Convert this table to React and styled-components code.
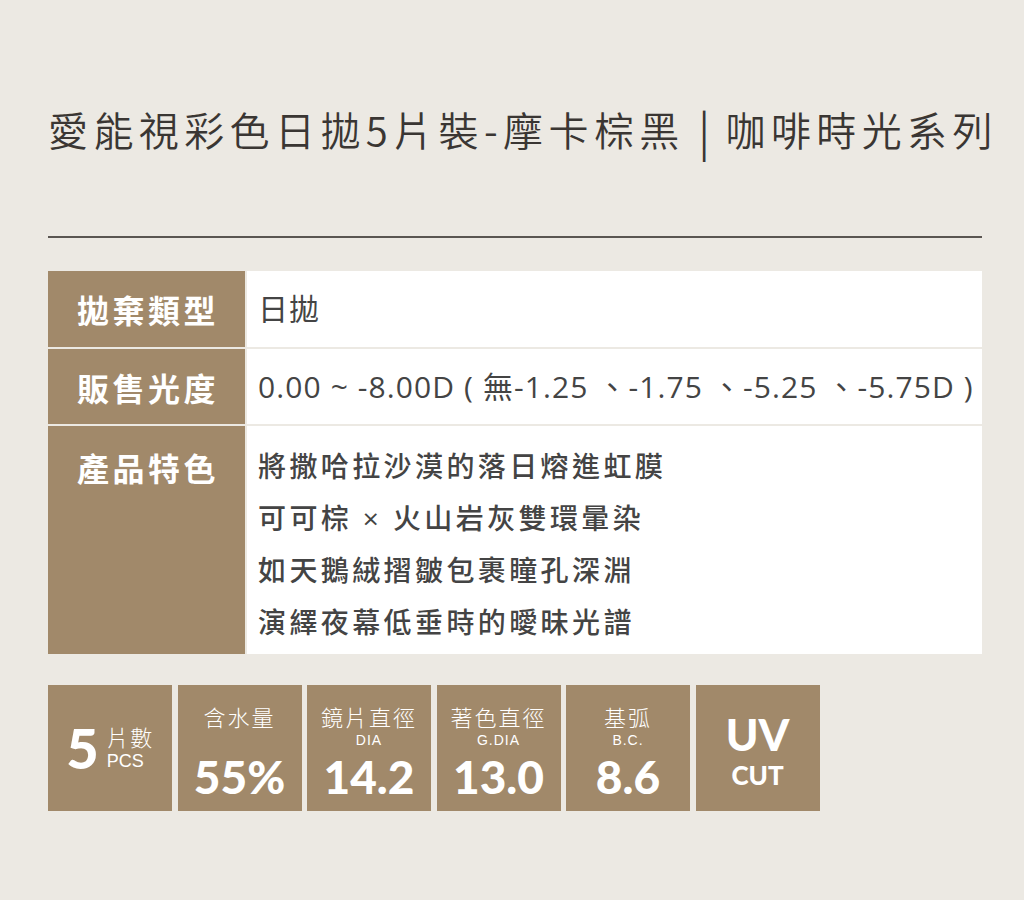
import React from "react"
import styled, { createGlobalStyle } from "styled-components"

const GlobalStyle = createGlobalStyle`
    body {
        margin: 0;
        background: #ece9e3;
        font-family: "Noto Sans CJK TC", "Noto Sans", sans-serif;
    }
`

const rows = [
    { label: "拋棄類型", value: ["日拋"], height: 76 },
    { label: "販售光度", value: ["0.00 ~ -8.00D ( 無-1.25 、-1.75 、-5.25 、-5.75D )"], height: 75 },
    {
        label: "產品特色",
        value: [
            "將撒哈拉沙漠的落日熔進虹膜",
            "可可棕 × 火山岩灰雙環暈染",
            "如天鵝絨摺皺包裹瞳孔深淵",
            "演繹夜幕低垂時的曖昧光譜",
        ],
        height: 228,
        multi: true,
    },
]

const specs = [
    { label: "含水量", sub: "", value: "55%" },
    { label: "鏡片直徑", sub: "DIA", value: "14.2" },
    { label: "著色直徑", sub: "G.DIA", value: "13.0" },
    { label: "基弧", sub: "B.C.", value: "8.6" },
]

const App = () => {
    return (
        <Page>
            <GlobalStyle />
            <Title>
                愛能視彩色日拋5片裝-摩卡棕黑<Bar>|</Bar>咖啡時光系列
            </Title>
            <Rule />
            <Table>
                {rows.map(row => (
                    <React.Fragment key={row.label}>
                        <HeadCell $h={row.height} $multi={row.multi}>{row.label}</HeadCell>
                        <ValueCell $multi={row.multi}>
                            {row.value.map(line => <Line key={line} $multi={row.multi}>{line}</Line>)}
                        </ValueCell>
                    </React.Fragment>
                ))}
            </Table>
            <Specs>
                <SpecBox>
                    <PcsRow>
                        <BigFive>5</BigFive>
                        <PcsText>
                            <PcsLabel>片數</PcsLabel>
                            <PcsEn>PCS</PcsEn>
                        </PcsText>
                    </PcsRow>
                </SpecBox>
                {specs.map(s => (
                    <SpecBox key={s.label} $top>
                        <SpecLabel>{s.label}</SpecLabel>
                        <SpecSub>{s.sub}</SpecSub>
                        <SpecValue>{s.value}</SpecValue>
                    </SpecBox>
                ))}
                <SpecBox>
                    <UvBig>UV</UvBig>
                    <UvCut>CUT</UvCut>
                </SpecBox>
            </Specs>
        </Page>
    )
}

const Page = styled.div`
    padding: 104px 42px 80px 48px;
`

const Title = styled.h1`
    margin: 0;
    font-size: 40px;
    line-height: 50px;
    font-weight: 350;
    letter-spacing: 5.4px;
    color: #3a3633;
    white-space: nowrap;
`

const Bar = styled.span`
    display: inline-block;
    margin: 0 16px 0 14px;
    letter-spacing: 0;
    font-weight: 400;
    transform: scaleY(1.15);
`

const Rule = styled.div`
    height: 2px;
    background: #5a5652;
    margin-top: 82px;
`

const Table = styled.div`
    display: grid;
    grid-template-columns: 197px 1fr;
    column-gap: 2px;
    row-gap: 2px;
    margin-top: 33px;
`

const HeadCell = styled.div`
    background: #a1896a;
    color: #fff;
    height: ${p => p.$h}px;
    display: flex;
    justify-content: center;
    align-items: ${p => (p.$multi ? "flex-start" : "center")};
    padding-top: ${p => (p.$multi ? "18px" : "0")};
    box-sizing: border-box;
    font-size: 32px;
    font-weight: 700;
    letter-spacing: 3.5px;
    padding-left: 3px;
`

const ValueCell = styled.div`
    background: #fff;
    display: flex;
    flex-direction: column;
    justify-content: ${p => (p.$multi ? "flex-start" : "center")};
    padding: ${p => (p.$multi ? "14px 0 0 11px" : "0 0 0 11px")};
    box-sizing: border-box;
    color: #444;
`

const Line = styled.div`
    font-family: "Open Sans", "Noto Sans CJK TC", sans-serif;
    font-size: ${p => (p.$multi ? "28px" : "30px")};
    line-height: ${p => (p.$multi ? "52px" : "40px")};
    font-weight: ${p => (p.$multi ? 500 : 400)};
    letter-spacing: ${p => (p.$multi ? "3.4px" : "1.1px")};
    white-space: pre;
`

const Specs = styled.div`
    display: flex;
    gap: 5.5px;
    margin-top: 31px;
`

const SpecBox = styled.div`
    width: 124px;
    height: 126px;
    background: #a1896a;
    color: #fff;
    display: flex;
    flex-direction: column;
    align-items: center;
    justify-content: ${p => (p.$top ? "flex-start" : "center")};
    padding-top: ${p => (p.$top ? "18px" : "0")};
    box-sizing: border-box;
`

const PcsRow = styled.div`
    display: flex;
    align-items: center;
    gap: 8px;
`

const BigFive = styled.div`
    font-family: "Lato", "Liberation Sans", sans-serif;
    font-size: 56px;
    font-weight: 900;
    line-height: 56px;
`

const PcsText = styled.div`
    display: flex;
    flex-direction: column;
    align-items: flex-start;
`

const PcsLabel = styled.div`
    font-size: 22px;
    font-weight: 300;
    line-height: 26px;
    letter-spacing: 1.5px;
`

const PcsEn = styled.div`
    font-family: "Liberation Sans", sans-serif;
    font-size: 18px;
    line-height: 24px;
`

const SpecLabel = styled.div`
    font-size: 22px;
    font-weight: 300;
    line-height: 26px;
    letter-spacing: 2px;
`

const SpecSub = styled.div`
    font-family: "Liberation Sans", sans-serif;
    font-size: 14px;
    line-height: 16px;
    height: 16px;
    margin-top: 3px;
    letter-spacing: 1px;
`

const SpecValue = styled.div`
    font-family: "Lato", "Liberation Sans", sans-serif;
    font-size: 46px;
    font-weight: 900;
    line-height: 46px;
    margin-top: 6px;
`

const UvBig = styled.div`
    font-family: "Lato", "Liberation Sans", sans-serif;
    font-size: 44px;
    font-weight: 900;
    line-height: 44px;
    margin-top: 4px;
`

const UvCut = styled.div`
    font-family: "Lato", "Liberation Sans", sans-serif;
    font-size: 26px;
    font-weight: 900;
    line-height: 28px;
    margin-top: 5px;
`

export default App
